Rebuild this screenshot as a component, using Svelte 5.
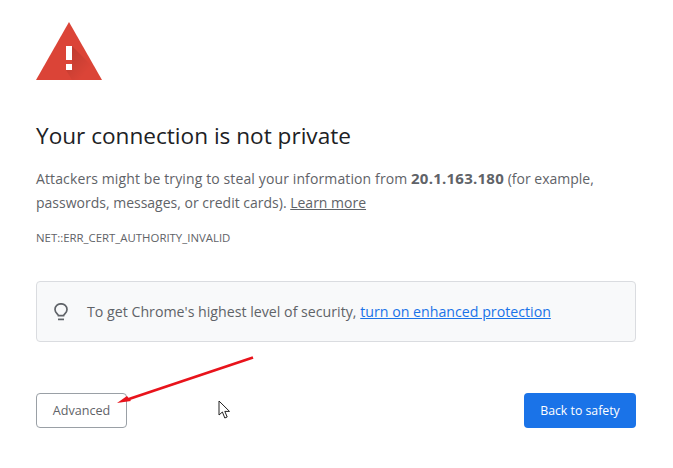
<script>
  const ip = '20.1.163.180'
</script>

<main class="page">
  <svg class="warn" width="66" height="58" viewBox="0 0 66 58" aria-hidden="true">
    <defs>
      <linearGradient id="fade" x1="0" y1="0" x2="1" y2="1">
        <stop offset="0" stop-color="#000" stop-opacity="0.16" />
        <stop offset="0.75" stop-color="#000" stop-opacity="0" />
      </linearGradient>
    </defs>
    <path d="M33 0 L66 58 H0 Z" fill="#db4437" />
    <path d="M36 24 L58 46 V58 H36 L30 48 L36 42 Z" fill="url(#fade)" />
    <rect x="30" y="24" width="6" height="14" fill="#fff" />
    <rect x="30" y="42" width="6" height="6" fill="#fff" />
  </svg>

  <h1>Your connection is not private</h1>
  <p class="msg">
    <span class="wide">Attackers might be trying to steal your information from</span> <b>{ip}</b> (for example,
    passwords, messages, or credit cards). <a href="#more">Learn more</a>
  </p>
  <div class="code">NET::ERR_CERT_AUTHORITY_INVALID</div>

  <div class="notice">
    <svg width="14" height="18" viewBox="0 0 14 18" fill="none" stroke="#5f6368" stroke-width="1.7" aria-hidden="true">
      <path d="M4.4 12.6 C4.2 11 1 10 1 6.4 A6 5.6 0 0 1 13 6.4 C13 10 9.8 11 9.6 12.6 Z" />
      <path d="M4 16.4 H10" />
    </svg>
    <span>To get Chrome's highest level of security, <a href="#protect">turn on enhanced protection</a></span>
  </div>

  <div class="actions">
    <button class="adv">Advanced</button>
    <button class="back">Back to safety</button>
  </div>

  <svg class="arrow" width="160" height="60" viewBox="0 0 160 60" aria-hidden="true">
    <path d="M153 7.5 L26 50" stroke="#e8131b" stroke-width="2.8" fill="none" />
    <path d="M17 53 L27 46 L31 51 Z" fill="#e8131b" />
  </svg>
  <svg class="cursor" width="14" height="20" viewBox="0 0 14 20" aria-hidden="true">
    <path d="M1 1 V15 L4.4 12 L6.8 18 L9.2 17 L6.8 11.4 H11.5 Z" fill="#fff" stroke="#222" stroke-width="1" />
  </svg>
</main>

<style>
  :global(body) {
    background: #fff;
  }
  .page {
    position: relative;
    box-sizing: border-box;
    width: 673px;
    height: 468px;
    padding: 22px 37px 0 36px;
    font-family: "Open Sans", "Noto Sans", sans-serif;
    color: #5f6368;
    overflow: hidden;
  }
  .warn {
    display: block;
  }
  h1 {
    margin: 41px 0 0;
    font-size: 22.6px;
    line-height: 30px;
    font-weight: 400;
    color: #202124;
  }
  .msg {
    margin: 16px 0 0;
    font-size: 14px;
    line-height: 24px;
  }
  .wide {
    letter-spacing: 0.12px;
  }
  a {
    color: #5f6368;
    text-decoration: underline;
  }
  b {
    font-weight: 700;
    font-size: 15px;
    line-height: 1;
    letter-spacing: 0.25px;
  }
  .code {
    margin-top: 15px;
    font-size: 11.4px;
    line-height: 16px;
  }
  .notice {
    display: flex;
    align-items: center;
    gap: 18px;
    box-sizing: border-box;
    height: 61px;
    margin-top: 35px;
    padding-left: 17px;
    background: #f8f9fa;
    border: 1px solid #dadce0;
    border-radius: 4px;
    font-size: 14.2px;
  }
  .notice span {
    margin-left: 1px;
  }
  .notice a {
    color: #1a73e8;
  }
  .actions {
    display: flex;
    justify-content: space-between;
    margin-top: 51px;
  }
  button {
    height: 35px;
    border-radius: 4px;
    font-family: inherit;
    padding: 0;
  }
  .adv {
    width: 91px;
    background: #fff;
    border: 1px solid #9aa0a6;
    color: #5f6368;
    font-size: 12.6px;
  }
  .back {
    width: 112px;
    background: #1a73e8;
    border: none;
    color: #fff;
    font-size: 12.3px;
    font-weight: 500;
  }
  .arrow {
    position: absolute;
    left: 100px;
    top: 350px;
  }
  .cursor {
    position: absolute;
    left: 218px;
    top: 400px;
  }
</style>
